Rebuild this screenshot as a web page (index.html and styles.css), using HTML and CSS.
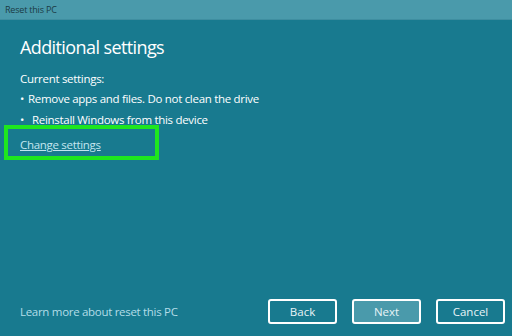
FILE: index.html
```html
<!DOCTYPE html>
<html lang="en">
<head>
  <meta charset="UTF-8" />
  <title>Reset this PC</title>
  <link rel="stylesheet" href="styles.css">
</head>
<body>
  <div class="window">
    <div class="titlebar">Reset this PC</div>

    <div class="content">
      <h1>Additional settings</h1>
      <p class="label">Current settings:</p>
      <ul class="settings">
        <li>Remove apps and files. Do not clean the drive</li>
        <li class="indent">Reinstall Windows from this device</li>
      </ul>
      <div class="highlight">
        <a href="#" class="link">Change settings</a>
      </div>
    </div>

    <div class="footer">
      <a href="#" class="learn">Learn more about reset this PC</a>
      <div class="buttons">
        <button class="btn">Back</button>
        <button class="btn primary">Next</button>
        <button class="btn">Cancel</button>
      </div>
    </div>
  </div>
</body>
</html>
```

FILE: styles.css
```css
* { margin: 0; padding: 0; box-sizing: border-box; }
body {
  font-family: "Open Sans", "Noto Sans", sans-serif;
  background: #187a8f;
  color: #fff;
  width: 512px;
  height: 336px;
  overflow: hidden;
}
.window {
  display: flex;
  flex-direction: column;
  height: 336px;
}
.titlebar {
  height: 20px;
  background: #4a9aab;
  border-bottom: 1px solid #3f8ea0;
  color: #1b3a44;
  font-size: 9px;
  line-height: 19px;
  padding-left: 5px;
  letter-spacing: -0.2px;
}
.content {
  flex: 1;
  padding: 14px 0 0 20px;
}
h1 {
  font-weight: 400;
  font-size: 18px;
  line-height: 26px;
  letter-spacing: -0.6px;
}
.label {
  font-size: 11.5px;
  margin-top: 11px;
  line-height: 16px;
  letter-spacing: -0.3px;
}
.settings {
  list-style: none;
  font-size: 11.5px;
  line-height: 16px;
  letter-spacing: -0.3px;
}
.settings li { margin-top: 4px; }
.settings li + li { margin-top: 5px; }
.settings li::before {
  content: "\2022";
  margin-right: 4px;
}
.settings li.indent::before { margin-right: 8px; }
.highlight {
  margin: -3px 0 0 -16px;
  width: 155px;
  height: 35px;
  border: 4px solid #1ee61e;
  padding: 3px 0 0 12px;
}
.link {
  color: #c3e6ef;
  font-size: 11.5px;
  line-height: 16px;
  letter-spacing: -0.3px;
  text-decoration: underline;
}
.footer {
  display: flex;
  justify-content: space-between;
  align-items: center;
  padding: 0 7px 12px 20px;
}
.learn {
  color: #b3dde8;
  font-size: 11.5px;
  letter-spacing: -0.3px;
  text-decoration: none;
}
.buttons {
  display: flex;
  gap: 15px;
}
.btn {
  width: 69px;
  height: 25px;
  background: transparent;
  border: 2px solid #fff;
  border-radius: 3px;
  color: #e8f4f7;
  font-family: inherit;
  font-size: 11.5px;
}
.btn.primary {
  background: #4a9aab;
}
```
